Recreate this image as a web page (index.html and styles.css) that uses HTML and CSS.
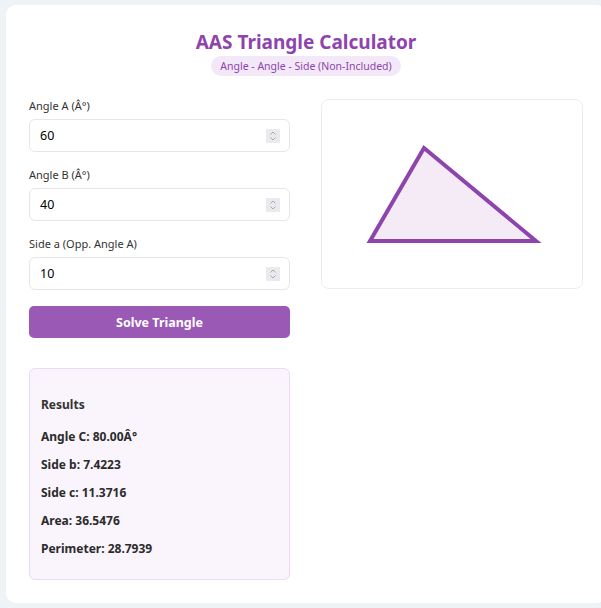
FILE: index.html
```html
<!DOCTYPE html>
<html lang="en">
<head>
<meta charset="utf-8">
<title>AAS Triangle Calculator</title>
<link rel="stylesheet" href="styles.css">
</head>
<body>
<main class="card">
  <header class="header">
    <h1 class="title">AAS Triangle Calculator</h1>
    <span class="badge">Angle - Angle - Side (Non-Included)</span>
  </header>
  <div class="grid">
    <section class="form">
      <div class="group">
        <label class="label">Angle A (Â°)</label>
        <div class="field"><input class="input" type="text" value="60"><span class="spin"><svg viewBox="0 0 14 14" width="14" height="14"><path d="M4.5 5.5 7 3 9.5 5.5M4.5 8.5 7 11 9.5 8.5" fill="none" stroke="#a9a9b3" stroke-width="1"/></svg></span></div>
      </div>
      <div class="group">
        <label class="label">Angle B (Â°)</label>
        <div class="field"><input class="input" type="text" value="40"><span class="spin"><svg viewBox="0 0 14 14" width="14" height="14"><path d="M4.5 5.5 7 3 9.5 5.5M4.5 8.5 7 11 9.5 8.5" fill="none" stroke="#a9a9b3" stroke-width="1"/></svg></span></div>
      </div>
      <div class="group">
        <label class="label">Side a (Opp. Angle A)</label>
        <div class="field"><input class="input" type="text" value="10"><span class="spin"><svg viewBox="0 0 14 14" width="14" height="14"><path d="M4.5 5.5 7 3 9.5 5.5M4.5 8.5 7 11 9.5 8.5" fill="none" stroke="#a9a9b3" stroke-width="1"/></svg></span></div>
      </div>
      <button class="button" type="button">Solve Triangle</button>
      <div class="results">
        <h3 class="results-title">Results</h3>
        <p class="row">Angle C: 80.00Â°</p>
        <p class="row">Side b: 7.4223</p>
        <p class="row">Side c: 11.3716</p>
        <p class="row">Area: 36.5476</p>
        <p class="row">Perimeter: 28.7939</p>
      </div>
    </section>
    <section class="diagram">
      <svg class="tri" viewBox="0 0 260 188" width="260" height="188">
        <polygon points="48,141 102,48 214,141" fill="#f4ebf7" stroke="#8e44ad" stroke-width="4" stroke-linejoin="miter"/>
      </svg>
    </section>
  </div>
</main>
</body>
</html>
```
FILE: styles.css
```css
html, body {
  margin: 0;
  padding: 0;
  overflow: hidden;
}
body {
  background: #f0f3f6;
  font-family: "Noto Sans", "Open Sans", sans-serif;
  color: #333;
  padding: 5px 0 0 6px;
  height: 608px;
  box-sizing: border-box;
}
.card {
  background: #fff;
  border-radius: 10px;
  width: 600px;
  height: 598px;
  box-sizing: border-box;
  padding: 26px 23px 0 23px;
}
.header {
  display: flex;
  flex-direction: column;
  align-items: center;
}
.title {
  margin: 0;
  font-size: 19px;
  line-height: 22px;
  font-weight: 700;
  color: #8e44ad;
}
.badge {
  margin-top: 3px;
  height: 20px;
  line-height: 20px;
  padding: 0 9px;
  border-radius: 10px;
  background: #f3e8f7;
  color: #8e44ad;
  font-size: 10.5px;
}
.grid {
  display: grid;
  grid-template-columns: 261px 262px;
  column-gap: 31px;
  margin-top: 23px;
}
.form {
  display: flex;
  flex-direction: column;
}
.group {
  display: flex;
  flex-direction: column;
  margin-bottom: 16px;
}
.label {
  font-size: 11px;
  line-height: 14px;
  margin-bottom: 6px;
  color: #333;
}
.field {
  display: flex;
  align-items: center;
  height: 33px;
  box-sizing: border-box;
  border: 1px solid #e6e6e6;
  border-radius: 6px;
  padding: 0 9px 0 10px;
}
.input {
  flex: 1;
  min-width: 0;
  border: none;
  outline: none;
  padding: 0;
  font-family: inherit;
  font-size: 12.5px;
  color: #000;
  background: transparent;
}
.spin {
  display: flex;
  width: 14px;
  height: 14px;
  background: #e9e9ee;
}
.button {
  height: 32px;
  border: none;
  border-radius: 5px;
  background: #9b59b6;
  color: #fff;
  font-family: inherit;
  font-weight: 700;
  font-size: 12.5px;
  padding: 0;
}
.results {
  margin-top: 30px;
  background: #faf4fc;
  border: 1px solid #ebdcf1;
  border-radius: 6px;
  padding: 28px 11px 22px 11px;
}
.results-title {
  margin: 0 0 16px 0;
  font-size: 12px;
  line-height: 16px;
  font-weight: 700;
}
.row {
  margin: 0 0 12px 0;
  font-size: 12px;
  line-height: 16px;
  font-weight: 700;
  color: #2b2b2b;
}
.row:last-child {
  margin-bottom: 0;
}
.diagram {
  align-self: start;
  height: 190px;
  box-sizing: border-box;
  border: 1px solid #ececec;
  border-radius: 8px;
  display: flex;
}
.tri {
  display: block;
}
```
